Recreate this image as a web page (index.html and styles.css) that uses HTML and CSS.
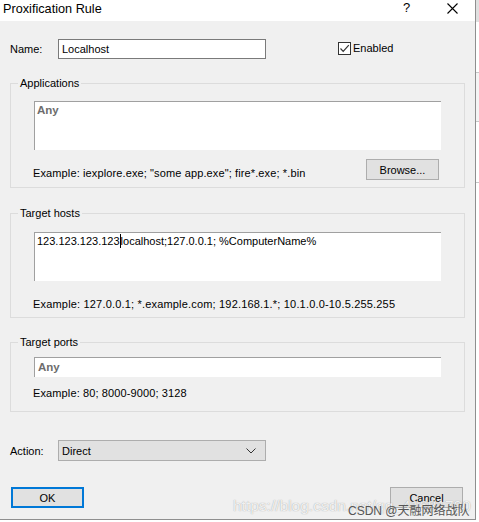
FILE: index.html
```html
<!DOCTYPE html>
<html>
<head>
<meta charset="utf-8">
<link rel="stylesheet" href="styles.css">
</head>
<body>
<div class="screen">
  <div class="window">
    <div class="titlebar">
      <span class="title">Proxification Rule</span>
      <span class="help">?</span>
      <svg class="close" width="11" height="11" viewBox="0 0 11 11"><path d="M0.5 0.5 L10.5 10.5 M10.5 0.5 L0.5 10.5" stroke="#000" stroke-width="1.1" fill="none"/></svg>
    </div>
    <div class="content">
      <div class="row name-row">
        <span class="label">Name:</span>
        <div class="field">Localhost</div>
        <label class="check">
          <span class="box"><svg width="11" height="11" viewBox="0 0 11 11"><path d="M1.5 5.5 L4.2 8.3 L9.8 2.2" stroke="#333" stroke-width="1.2" fill="none"/></svg></span>
          <span>Enabled</span>
        </label>
      </div>

      <fieldset class="group apps">
        <legend>Applications</legend>
        <div class="area"><span class="any">Any</span></div>
        <div class="example-row">
          <span class="example">Example: iexplore.exe; "some app.exe"; fire*.exe; *.bin</span>
          <button class="btn browse">Browse...</button>
        </div>
      </fieldset>

      <fieldset class="group hosts">
        <legend>Target hosts</legend>
        <div class="area">123.123.123.123<span class="caret"></span>localhost;127.0.0.1; %ComputerName%</div>
        <div class="example">Example: 127.0.0.1; *.example.com; 192.168.1.*; 10.1.0.0-10.5.255.255</div>
      </fieldset>

      <fieldset class="group ports">
        <legend>Target ports</legend>
        <div class="line"><span class="any">Any</span></div>
        <div class="example">Example: 80; 8000-9000; 3128</div>
      </fieldset>

      <div class="row action-row">
        <span class="label">Action:</span>
        <div class="select">
          <span>Direct</span>
          <svg width="10" height="6" viewBox="0 0 10 6"><path d="M0.5 0.5 L5 5 L9.5 0.5" stroke="#333" stroke-width="1" fill="none"/></svg>
        </div>
      </div>

      <div class="buttons">
        <button class="btn ok">OK</button>
        <button class="btn cancel">Cancel</button>
      </div>
    </div>
    <div class="watermark">https://blog.csdn.net/qq_41681700</div>
    <div class="csdn">CSDN @天融网络战队</div>
  </div>
  <div class="side">
    <div class="side-a"></div>
    <div class="side-b"></div>
    <div class="side-c"></div>
  </div>
</div>
</body>
</html>
```
FILE: styles.css
```css
* { box-sizing: border-box; }
html, body { margin: 0; padding: 0; }
body {
  width: 479px;
  height: 522px;
  overflow: hidden;
  background: #ffffff;
  font-family: "Liberation Sans", Arial, sans-serif;
  font-size: 11px;
  color: #000;
}
.screen {
  display: flex;
  height: 522px;
}
.window {
  position: relative;
  width: 476px;
  height: 520px;
  background: #f0f0f0;
  border-right: 1px solid #8f8f8f;
  border-bottom: 1px solid #8f8f8f;
  flex: none;
}
.titlebar {
  height: 21px;
  background: #fff;
  display: flex;
  align-items: center;
  position: relative;
}
.title {
  font-size: 12.7px;
  margin-left: 3px;
  margin-top: -4px;
}
.help {
  position: absolute;
  left: 403px;
  top: 0px;
  font-size: 13px;
}
.close {
  position: absolute;
  left: 447px;
  top: 3px;
}
.content {
  padding: 0 10px;
}
.row {
  display: flex;
  align-items: center;
}
.label {
  width: 48px;
}
.name-row {
  margin-top: 18px;
  height: 20px;
}
.field {
  width: 208px;
  height: 20px;
  border: 1px solid #7a7a7a;
  background: #fff;
  padding: 2px 0 0 3px;
  line-height: 14px;
}
.check {
  display: flex;
  align-items: center;
  margin-left: 72px;
  gap: 2px;
  margin-top: -2px;
}
.box {
  width: 13px;
  height: 13px;
  border: 1px solid #333;
  background: #fff;
  display: flex;
  align-items: center;
  justify-content: center;
}
.group {
  margin: 0;
  border: 1px solid #dcdcdc;
  width: 455px;
  padding: 0 23px;
}
.group legend {
  padding: 0 2px;
  margin-left: -16px;
  line-height: 14px;
}
.apps { margin-top: 17px; padding-top: 11px; padding-bottom: 7px; }
.hosts { margin-top: 18px; padding-top: 12px; padding-bottom: 6px; }
.ports { margin-top: 17px; padding-top: 8px; padding-bottom: 11px; }
.area {
  height: 49px;
  background: #fff;
  border-top: 1px solid #a0a0a0;
  border-left: 1px solid #a0a0a0;
  padding: 1px 0 0 2px;
  line-height: 14px;
}
.line {
  height: 20px;
  background: #fff;
  border-top: 1px solid #a0a0a0;
  border-left: 1px solid #a0a0a0;
  padding: 2px 0 0 3px;
  line-height: 14px;
}
.any {
  font-weight: bold;
  color: #6d6d6d;
  font-size: 11.5px;
}
.caret {
  display: inline-block;
  width: 1px;
  height: 14px;
  background: #000;
  vertical-align: top;
}
.example-row {
  margin-top: 9px;
  display: flex;
  align-items: flex-end;
  justify-content: space-between;
}
.example {
  line-height: 14px;
  margin-left: -1px;
  letter-spacing: 0.12px;
}
.hosts .example { margin-top: 16px; letter-spacing: 0.18px; }
.ports .example { margin-top: 9px; }
.btn {
  font-family: inherit;
  font-size: 11px;
  background: #e1e1e1;
  border: 1px solid #adadad;
  height: 21px;
  width: 73px;
  padding: 0;
  color: #000;
}
.browse { margin-right: 2px; }
.action-row {
  margin-top: 28px;
  height: 21px;
}
.select {
  width: 208px;
  height: 21px;
  background: #e1e1e1;
  border: 1px solid #adadad;
  display: flex;
  align-items: center;
  justify-content: space-between;
  padding: 0 9px 0 3px;
}
.buttons {
  margin-top: 26px;
  display: flex;
  justify-content: space-between;
  padding: 0 2px 0 1px;
}
.ok {
  border: 2px solid #0078d7;
}
.watermark {
  position: absolute;
  left: 233px;
  top: 497px;
  font-size: 15.5px;
  line-height: 18px;
  color: rgba(255,255,255,0.85);
  text-shadow: 0 0 1px rgba(110,110,110,0.7);
  white-space: nowrap;
  pointer-events: none;
}
.csdn {
  position: absolute;
  left: 348px;
  top: 501px;
  font-size: 12px;
  color: #555;
  font-family: "Liberation Sans", "Noto Sans CJK SC", sans-serif;
  white-space: nowrap;
}
.side {
  flex: 1;
  display: flex;
  flex-direction: column;
  background: #fff;
}
.side-a { height: 22px; background: #e0e0e0; }
.side-b { height: 50px; margin-top: 50px; border-top: 1px solid #c8c8c8; border-bottom: 1px solid #c8c8c8; background: #f4f4f4; }
.side-c { height: 40px; margin-top: 60px; border-top: 1px solid #c8c8c8; }
```
